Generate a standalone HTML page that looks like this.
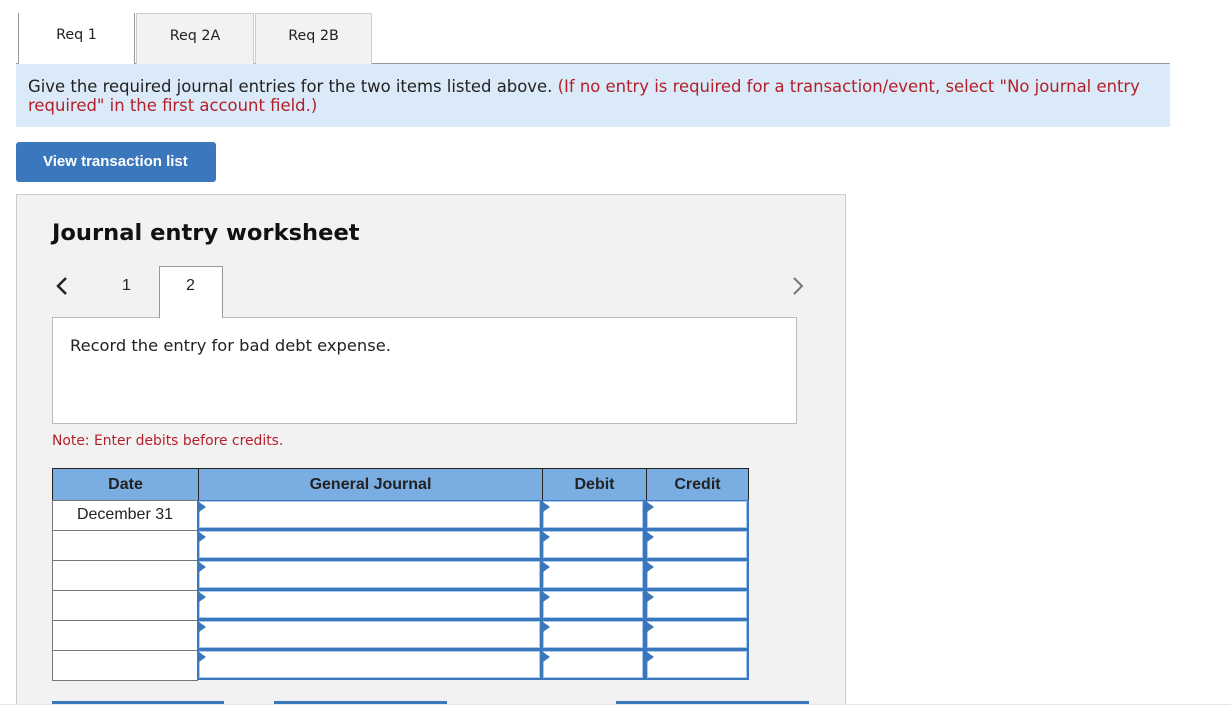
<!DOCTYPE html>
<html><head><meta charset="utf-8"><style>
*{margin:0;padding:0;box-sizing:border-box}
body{width:1231px;height:721px;background:#fff;position:relative;overflow:hidden;font-family:"DejaVu Sans","Liberation Sans",sans-serif;color:#222}
.a{position:absolute}
.tab{position:absolute;top:13px;height:51px;font-size:14.3px;text-align:center;line-height:44px;border:1px solid #ccc;border-bottom:none;background:#f2f2f2}
.ar{font-family:"Liberation Sans",Arial,sans-serif}
.row{position:absolute;left:52px;width:697px;height:30px}
.c{position:absolute;top:0;height:31px;border:1px solid #777;background:#fff}
.in{position:absolute;top:0;height:30px;border:2px solid #3a77bd;border-top-width:1px;background:#fff;box-shadow:inset 0 0 0 1px #a9c9ef}
.in:before{content:"";position:absolute;left:0;top:1px;border-left:7px solid #3a77bd;border-top:5px solid transparent;border-bottom:5px solid transparent}
</style></head><body>
<div class="a" style="left:16px;top:63px;width:1154px;height:1px;background:#999"></div>
<div class="tab" style="left:18px;width:117px;background:#fff;border-color:#999;border-top:none;height:52px">Req 1</div>
<div class="tab" style="left:136px;width:118px">Req 2A</div>
<div class="tab" style="left:255px;width:117px">Req 2B</div>
<div class="a" style="left:16px;top:64px;width:1154px;height:63px;background:#dbeaf8"></div>
<div class="a" style="left:28px;top:77px;font-size:16.45px;line-height:19px;white-space:nowrap">Give the required journal entries for the two items listed above. <span style="color:#b3202a">(If no entry is required for a transaction/event, select "No journal entry<br>required" in the first account field.)</span></div>
<div class="a ar" style="left:16px;top:142px;width:200px;height:40px;background:#3a77bd;border-radius:3px;color:#fff;font-weight:bold;font-size:15px;line-height:40px;padding-left:27px">View transaction list</div>
<div class="a" style="left:16px;top:194px;width:830px;height:520px;background:#f2f2f2;border:1px solid #ccc"></div>
<div class="a" style="left:52px;top:220px;font-size:22.6px;font-weight:bold;color:#111">Journal entry worksheet</div>
<svg class="a" style="left:55px;top:276px" width="14" height="20"><path d="M11 2 L3 10 L11 18" stroke="#222" stroke-width="2.5" fill="none"/></svg>
<div class="a ar" style="left:122px;top:277px;font-size:16px">1</div>
<div class="a" style="left:159px;top:266px;width:64px;height:52px;background:#fff;border:1px solid #999;border-bottom:none;z-index:2"></div>
<div class="a ar" style="left:186px;top:277px;font-size:16px;z-index:3">2</div>
<svg class="a" style="left:791px;top:276px" width="14" height="20"><path d="M3 2 L11 10 L3 18" stroke="#777" stroke-width="2" fill="none"/></svg>
<div class="a" style="left:52px;top:317px;width:745px;height:107px;background:#fff;border:1px solid #bbb"></div>
<div class="a" style="left:70px;top:336px;font-size:16.3px">Record the entry for bad debt expense.</div>
<div class="a" style="left:52px;top:433px;font-size:13.9px;color:#b3202a">Note: Enter debits before credits.</div>
<div class="a ar" style="left:52px;top:468px;width:697px;height:33px;background:#7aaee3;border:1px solid #222;font-weight:bold;font-size:16px;line-height:31px">
<div class="a" style="left:0;width:145px;text-align:center">Date</div>
<div class="a" style="left:145px;width:344px;height:31px;text-align:center;border-left:1px solid #222">General Journal</div>
<div class="a" style="left:489px;width:104px;height:31px;text-align:center;border-left:1px solid #222">Debit</div>
<div class="a" style="left:593px;width:102px;height:31px;text-align:center;border-left:1px solid #222">Credit</div>
</div>
<div class="row" style="top:500px"><div class="c ar" style="left:0;width:146px;text-align:center;font-size:16px;line-height:28px">December 31</div><div class="in" style="left:145px;width:345px"></div><div class="in" style="left:489px;width:104px"></div><div class="in" style="left:593px;width:104px"></div></div>
<div class="row" style="top:530px"><div class="c" style="left:0;width:146px"></div><div class="in" style="left:145px;width:345px"></div><div class="in" style="left:489px;width:104px"></div><div class="in" style="left:593px;width:104px"></div></div>
<div class="row" style="top:560px"><div class="c" style="left:0;width:146px"></div><div class="in" style="left:145px;width:345px"></div><div class="in" style="left:489px;width:104px"></div><div class="in" style="left:593px;width:104px"></div></div>
<div class="row" style="top:590px"><div class="c" style="left:0;width:146px"></div><div class="in" style="left:145px;width:345px"></div><div class="in" style="left:489px;width:104px"></div><div class="in" style="left:593px;width:104px"></div></div>
<div class="row" style="top:620px"><div class="c" style="left:0;width:146px"></div><div class="in" style="left:145px;width:345px"></div><div class="in" style="left:489px;width:104px"></div><div class="in" style="left:593px;width:104px"></div></div>
<div class="row" style="top:650px"><div class="c" style="left:0;width:146px"></div><div class="in" style="left:145px;width:345px"></div><div class="in" style="left:489px;width:104px"></div><div class="in" style="left:593px;width:104px"></div></div>
<div class="a" style="left:52px;top:701px;width:172px;height:4px;background:#3a77bd"></div>
<div class="a" style="left:274px;top:701px;width:173px;height:4px;background:#3a77bd"></div>
<div class="a" style="left:616px;top:701px;width:193px;height:4px;background:#3a77bd"></div>
<div class="a" style="left:0;top:704px;width:1231px;height:17px;background:#fff;border-top:1px solid #e6e6e6"></div>
</body></html>
